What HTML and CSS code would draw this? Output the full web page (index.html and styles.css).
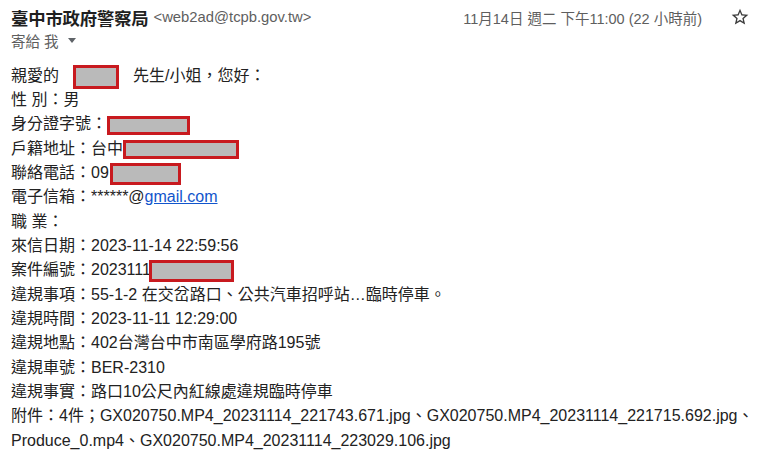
FILE: index.html
```html
<!DOCTYPE html>
<html lang="zh-Hant">
<head>
<meta charset="utf-8">
<title>臺中市政府警察局</title>
<link rel="stylesheet" href="styles.css">
</head>
<body>
<div class="mail">
  <div class="head">
    <div class="row-top">
      <span class="sender">臺中市政府警察局</span>
      <span class="addr">&lt;web2ad@tcpb.gov.tw&gt;</span>
      <span class="date">11月14日 週二 下午11:00 (22 小時前)</span>
      <svg class="star" viewBox="0 0 24 24" width="20" height="20"><path fill="#3c3c3c" d="M22 9.24l-7.19-.62L12 2 9.19 8.63 2 9.24l5.46 4.73L5.82 21 12 17.27 18.18 21l-1.63-7.03L22 9.24zM12 15.4l-3.76 2.27 1-4.28-3.32-2.88 4.38-.38L12 6.1l1.71 4.04 4.38.38-3.32 2.88 1 4.28L12 15.4z"/></svg>
    </div>
    <div class="row-to">
      <span>寄給 我</span><span class="caret"></span>
    </div>
  </div>
  <div class="content">
    <div class="line">親愛的<span class="redact r-name"></span>先生/小姐，您好：</div>
    <div class="line">性 別：男</div>
    <div class="line">身分證字號：<span class="redact r-id"></span></div>
    <div class="line">戶籍地址：台中<span class="redact r-addr"></span></div>
    <div class="line">聯絡電話：09<span class="redact r-tel"></span></div>
    <div class="line">電子信箱：******@<a class="link" href="#">gmail.com</a></div>
    <div class="line">職 業：</div>
    <div class="line">來信日期：2023-11-14 22:59:56</div>
    <div class="line">案件編號：2023111<span class="redact r-case"></span></div>
    <div class="line">違規事項：55-1-2 在交岔路口、公共汽車招呼站…臨時停車。</div>
    <div class="line">違規時間：2023-11-11 12:29:00</div>
    <div class="line">違規地點：402台灣台中市南區學府路195號</div>
    <div class="line">違規車號：BER-2310</div>
    <div class="line">違規事實：路口10公尺內紅線處違規臨時停車</div>
    <div class="line">附件：4件；GX020750.MP4_20231114_221743.671.jpg、GX020750.MP4_20231114_221715.692.jpg、Produce_0.mp4、GX020750.MP4_20231114_223029.106.jpg</div>
  </div>
</div>
</body>
</html>
```
FILE: styles.css
```css
html, body {
  margin: 0;
  padding: 0;
  background: #ffffff;
}

.mail {
  padding: 0 8px 0 11px;
  font-family: "Liberation Sans", "Noto Sans CJK TC", sans-serif;
}

.head {
  padding-top: 5px;
}

.row-top {
  display: flex;
  align-items: center;
  height: 24px;
}

.sender {
  font-size: 17.4px;
  font-weight: 700;
  color: #1f1f1f;
  font-family: "Noto Sans CJK TC", sans-serif;
  letter-spacing: -0.2px;
}

.addr {
  margin-left: 5px;
  font-size: 14.8px;
  color: #5e5e5e;
}

.date {
  margin-left: auto;
  font-size: 14.5px;
  color: #5e5e5e;
}

.star {
  margin-left: 28px;
  margin-right: 18px;
  flex: none;
}

.row-to {
  display: flex;
  align-items: center;
  height: 22px;
  font-size: 14.5px;
  color: #5e5e5e;
}

.caret {
  margin-left: 9px;
  width: 0;
  height: 0;
  border-left: 4px solid transparent;
  border-right: 4px solid transparent;
  border-top: 5px solid #5f6368;
}

.content {
  margin-top: 12.8px;
  font-size: 16px;
  line-height: 24.33px;
  color: #222222;
}

.link {
  color: #1155cc;
  text-decoration: underline;
}

.redact {
  display: inline-block;
  box-sizing: border-box;
  vertical-align: middle;
  background: #bababa;
  border: 3px solid #c81a1f;
  margin-top: -6px;
  margin-bottom: -6px;
}

.r-name {
  width: 46px;
  height: 24px;
  margin-left: 14px;
  margin-right: 14px;
}

.r-id {
  width: 83px;
  height: 19px;
  margin-left: 0;
}

.r-addr {
  width: 116px;
  height: 19px;
}

.r-tel {
  width: 71px;
  height: 22px;
  margin-left: 1px;
}

.r-case {
  width: 85px;
  height: 22px;
  margin-left: -2px;
}
```
